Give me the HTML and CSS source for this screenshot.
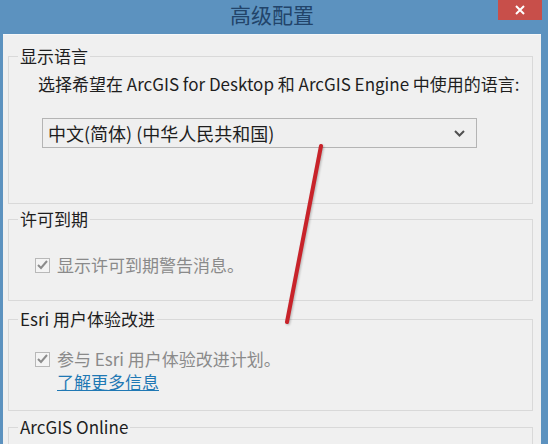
FILE: index.html
```html
<!DOCTYPE html>
<html lang="zh-CN">
<head>
    <meta charset="UTF-8">
    <meta name="viewport" content="width=device-width, initial-scale=1.0">
    <title>高级配置</title>
    <link rel="stylesheet" href="styles.css">
</head>
<body>
    <div class="window">
        <div class="titlebar">
            <span class="title">高级配置</span>
            <button class="close-btn" aria-label="关闭">
                <svg width="10" height="10" viewBox="0 0 10 10">
                    <path d="M1 1 L9 9 M9 1 L1 9" stroke="#fff" stroke-width="2" fill="none"/>
                </svg>
            </button>
        </div>

        <div class="content">
            <fieldset class="group group-lang">
                <legend>显示语言</legend>
                <p class="prompt">选择希望在 ArcGIS for Desktop 和 ArcGIS Engine 中使用的语言:</p>
                <div class="select">
                    <span>中文(简体) (中华人民共和国)</span>
                    <svg class="chevron" width="11" height="7" viewBox="0 0 11 7">
                        <path d="M1 1 L5.5 5.5 L10 1" stroke="#505050" stroke-width="2" fill="none"/>
                    </svg>
                </div>
            </fieldset>

            <fieldset class="group group-license">
                <legend>许可到期</legend>
                <label class="check">
                    <span class="box">
                        <svg width="11" height="10" viewBox="0 0 11 10">
                            <path d="M1 5 L4 8 L10 1" stroke="#8c8c8c" stroke-width="2" fill="none"/>
                        </svg>
                    </span>
                    显示许可到期警告消息。
                </label>
            </fieldset>

            <fieldset class="group group-esri">
                <legend>Esri 用户体验改进</legend>
                <label class="check">
                    <span class="box">
                        <svg width="11" height="10" viewBox="0 0 11 10">
                            <path d="M1 5 L4 8 L10 1" stroke="#8c8c8c" stroke-width="2" fill="none"/>
                        </svg>
                    </span>
                    参与 Esri 用户体验改进计划。
                </label>
                <a class="more-link" href="#">了解更多信息</a>
            </fieldset>

            <fieldset class="group group-online">
                <legend>ArcGIS Online</legend>
            </fieldset>
        </div>

        <!-- red marker line drawn over the dialog -->
        <svg class="marker" width="548" height="444" viewBox="0 0 548 444">
            <line x1="321" y1="146" x2="287" y2="322" stroke="#c8232a" stroke-width="4" stroke-linecap="round"/>
        </svg>
    </div>
</body>
</html>
```

FILE: styles.css
```css
html, body {
    margin: 0;
    padding: 0;
    overflow: hidden;
}
body {
    font-family: "Noto Sans CJK SC", "Noto Sans", sans-serif;
    color: #1e1e1e;
}
.window {
    position: relative;
    width: 548px;
    height: 444px;
    background-color: #5c92bf;
    display: flex;
    flex-direction: column;
}
.titlebar {
    height: 34px;
    display: flex;
    justify-content: center;
    padding-top: 2px;
    box-sizing: border-box;
}
.title {
    font-size: 21px;
    line-height: 24px;
    color: #22446a;
    margin-left: -4px;
}
.close-btn {
    position: absolute;
    top: 0;
    right: 6px;
    width: 44px;
    height: 20px;
    border: none;
    padding: 0;
    background-color: #c84f4a;
    display: flex;
    align-items: center;
    justify-content: center;
}
.content {
    flex: 1;
    margin: 0 7px 0 3px;
    padding: 11px 8px 0 5px;
    background-color: #f0f0f0;
    border-top: 1px solid #f7f8f9;
    overflow: hidden;
}
.group {
    margin: 0;
    padding: 0 0 0 9px;
    border: 1px solid #d9d9d9;
    min-width: 0;
}
.group legend {
    padding: 0 2px;
    font-size: 17px;
    line-height: 20px;
    color: #1e1e1e;
}
.prompt {
    margin: 7px 0 0 20px;
    font-size: 17px;
    line-height: 22px;
    white-space: nowrap;
}
.select {
    margin: 23px 0 55px 24px;
    width: 435px;
    height: 30px;
    box-sizing: border-box;
    border: 1px solid #b4b4b4;
    background-color: #efefef;
    display: flex;
    align-items: center;
    justify-content: space-between;
    padding: 0 11px 0 5px;
    font-size: 18px;
}
.group-license {
    margin-top: 5px;
    padding-bottom: 24px;
}
.group-esri {
    margin-top: 8px;
    padding-bottom: 17px;
}
.group-online {
    margin-top: 6px;
    height: 60px;
}
.check {
    display: flex;
    align-items: center;
    gap: 7px;
    margin-left: 17px;
    font-size: 17px;
    line-height: 22px;
    color: #8a8a8a;
}
.group-license .check {
    margin-top: 25px;
}
.group-esri .check {
    margin-top: 19px;
}
.box {
    width: 15px;
    height: 15px;
    box-sizing: border-box;
    border: 1px solid #b8b8b8;
    background-color: #f4f4f4;
    display: flex;
    align-items: center;
    justify-content: center;
}
.more-link {
    display: block;
    margin: 1px 0 0 39px;
    width: max-content;
    font-size: 17px;
    line-height: 22px;
    color: #1f78b4;
    text-decoration: underline;
}
.marker {
    position: absolute;
    top: 0;
    left: 0;
    pointer-events: none;
    filter: drop-shadow(1px 1px 1px rgba(0,0,0,0.25));
}
```
